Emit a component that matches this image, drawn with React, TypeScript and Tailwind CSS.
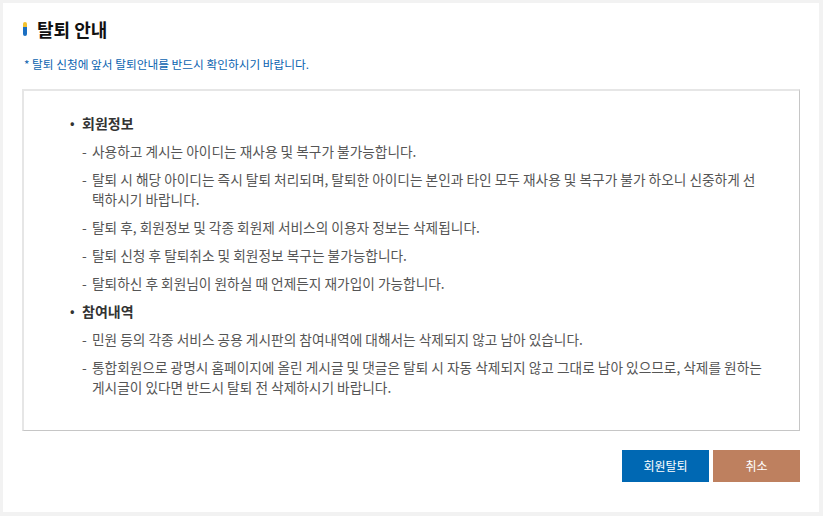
import React from "react";

const sections = [
  {
    title: "회원정보",
    items: [
      ["사용하고 계시는 아이디는 재사용 및 복구가 불가능합니다."],
      [
        "탈퇴 시 해당 아이디는 즉시 탈퇴 처리되며, 탈퇴한 아이디는 본인과 타인 모두 재사용 및 복구가 불가 하오니 신중하게 선",
        "택하시기 바랍니다.",
      ],
      ["탈퇴 후, 회원정보 및 각종 회원제 서비스의 이용자 정보는 삭제됩니다."],
      ["탈퇴 신청 후 탈퇴취소 및 회원정보 복구는 불가능합니다."],
      ["탈퇴하신 후 회원님이 원하실 때 언제든지 재가입이 가능합니다."],
    ],
  },
  {
    title: "참여내역",
    items: [
      ["민원 등의 각종 서비스 공용 게시판의 참여내역에 대해서는 삭제되지 않고 남아 있습니다."],
      [
        "통합회원으로 광명시 홈페이지에 올린 게시글 및 댓글은 탈퇴 시 자동 삭제되지 않고 그대로 남아 있으므로, 삭제를 원하는",
        "게시글이 있다면 반드시 탈퇴 전 삭제하시기 바랍니다.",
      ],
    ],
  },
];

export default function App() {
  return (
    <div
      className="w-[823px] h-[516px] bg-[#f2f2f2] p-[3px] pr-[4px] pb-[4px]"
      style={{ fontFamily: '"Noto Sans CJK KR", "Noto Sans", sans-serif' }}
    >
      <div className="h-full bg-white pl-[19px] pr-[19px] pt-[16px]">
        <div className="flex items-center gap-[10px] h-[20px]">
          <span className="flex flex-col w-[4px] h-[14px] rounded-full overflow-hidden ml-[1px]">
            <span className="h-[5px] bg-[#f2c230]" />
            <span className="flex-1 bg-[#1b6fc2]" />
          </span>
          <h1 className="text-[18px] font-bold text-[#111] leading-[20px]">
            탈퇴 안내
          </h1>
        </div>
        <p className="mt-[18px] ml-[2px] text-[11.7px] leading-[14px] text-[#0a63b0]">
          * 탈퇴 신청에 앞서 탈퇴안내를 반드시 확인하시기 바랍니다.
        </p>

        <div className="mt-[18px] h-[342px] border-l-2 border-t-2 border-l-[#e6e6e6] border-t-[#e6e6e6] border-r border-b border-r-[#c6c6c6] border-b-[#c6c6c6] pl-[46px] pr-[4px] pt-[22px]">
          {sections.map((s) => (
            <div key={s.title} className="mb-[8px]">
              <div className="flex items-center text-[14px] leading-[20px] font-bold text-[#333]">
                <span className="w-[12px] text-[12px]">•</span>
                {s.title}
              </div>
              {s.items.map((lines, i) => (
                <div
                  key={i}
                  className="flex mt-[8px] ml-[12px] text-[13.7px] leading-[20px] text-[#555] whitespace-nowrap"
                >
                  <span className="w-[10px] shrink-0">-</span>
                  <span className="flex flex-col">
                    {lines.map((l, j) => (
                      <span key={j}>{l}</span>
                    ))}
                  </span>
                </div>
              ))}
            </div>
          ))}
        </div>

        <div className="flex justify-end gap-[4px] mt-[19px]">
          <button className="w-[87px] h-[32px] bg-[#0068b3] text-white text-[12px]">
            회원탈퇴
          </button>
          <button className="w-[87px] h-[32px] bg-[#be805f] text-white text-[12px]">
            취소
          </button>
        </div>
      </div>
    </div>
  );
}
